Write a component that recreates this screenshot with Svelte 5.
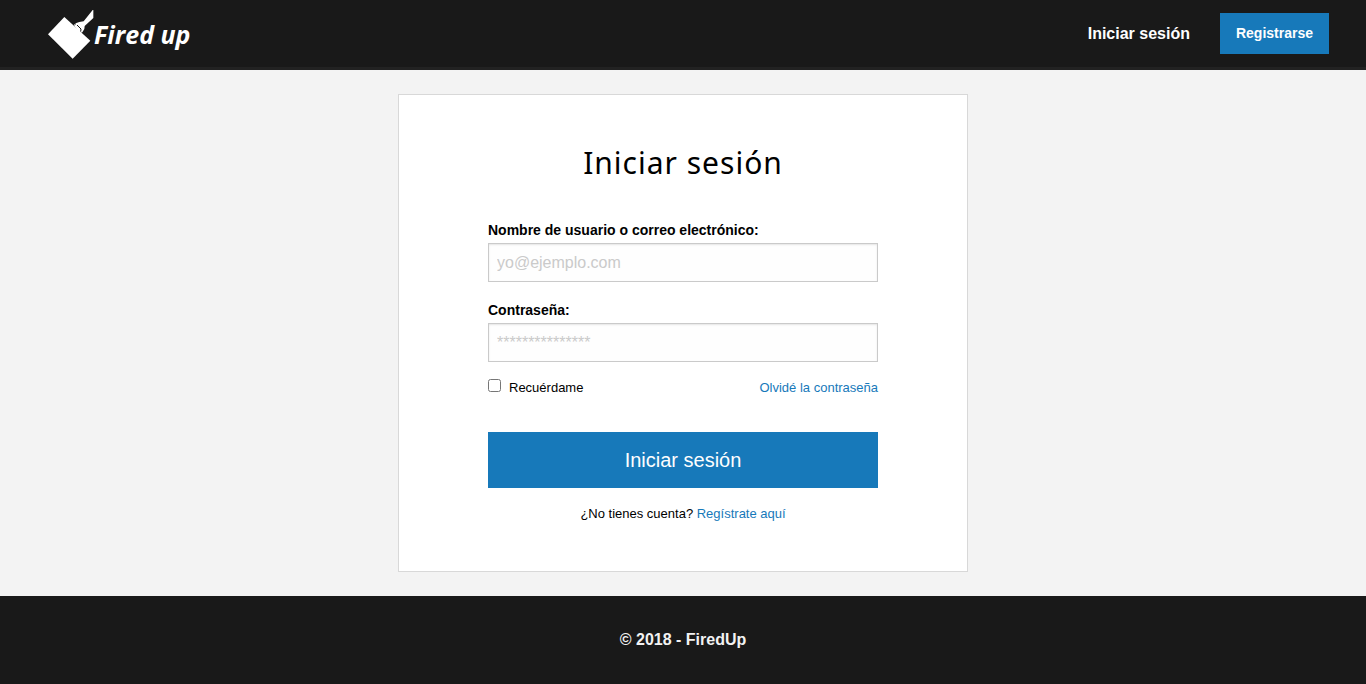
<script>
  let user = $state('');
  let password = $state('');
  let remember = $state(false);
</script>

<div class="page">
  <header>
    <a class="brand" href="#inicio">
      <svg viewBox="9 12 138 150" width="46" height="50" aria-hidden="true">
        <path d="M58 36 136 107 83 161 9 88Z" fill="#fff" />
        <path d="M86 60 94 54 103 51 116 49 143 15 145 15 145 39 119 63 118 72 112 82 103 84Z" fill="#fff" />
        <path d="M96 60 108 72 107 80" stroke="#191919" stroke-width="3" fill="none" />
        <path d="M88 61 92 58" stroke="#191919" stroke-width="2" fill="none" />
      </svg>
      <span>Fired up</span>
    </a>
    <nav>
      <a class="login" href="#login">Iniciar sesión</a>
      <a class="register" href="#registro">Registrarse</a>
    </nav>
  </header>

  <main>
    <section class="card">
      <h1>Iniciar sesión</h1>
      <form onsubmit={(e) => e.preventDefault()}>
        <div class="field">
          <label for="user">Nombre de usuario o correo electrónico:</label>
          <input id="user" type="text" placeholder="yo@ejemplo.com" bind:value={user} />
        </div>
        <div class="field">
          <label for="password">Contraseña:</label>
          <input id="password" type="password" placeholder="***************" bind:value={password} />
        </div>
        <div class="options">
          <label class="remember"><input type="checkbox" bind:checked={remember} />Recuérdame</label>
          <a href="#recuperar">Olvidé la contraseña</a>
        </div>
        <button type="submit">Iniciar sesión</button>
        <p class="signup">¿No tienes cuenta? <a href="#registro">Regístrate aquí</a></p>
      </form>
    </section>
  </main>

  <footer>© 2018 - FiredUp</footer>
</div>

<style>
  :global(body) {
    margin: 0;
    background: #f3f3f3;
  }
  .page {
    min-height: 100vh;
    display: flex;
    flex-direction: column;
    font-family: "Liberation Sans", Arial, sans-serif;
    font-size: 13px;
    color: #000;
  }
  .page * {
    box-sizing: border-box;
  }
  a {
    color: #1779ba;
    text-decoration: none;
  }
  header {
    display: flex;
    align-items: center;
    justify-content: space-between;
    height: 70px;
    padding: 0 37px 0 48px;
    background: #191919;
    border-bottom: 3px solid #222;
  }
  .brand {
    display: flex;
    align-items: center;
    color: #fff;
    font: italic bold 25px/32px "Open Sans", "Noto Sans", sans-serif;
  }
  nav {
    display: flex;
    align-items: center;
    gap: 30px;
    font-weight: bold;
  }
  .login {
    color: #fefefe;
    font-size: 16px;
  }
  .register {
    padding: 12px 16px;
    background: #1779ba;
    color: #fefefe;
    font-size: 14px;
    line-height: 17px;
  }
  main {
    flex: 1;
    padding: 24px;
  }
  .card {
    max-width: 570px;
    margin: 0 auto;
    padding: 45px 89px 47px;
    background: #fff;
    border: 1px solid #d8d8d8;
  }
  h1 {
    margin: 0 0 34px;
    font: 400 30px/45px "Lucida Sans", "Noto Sans", sans-serif;
    letter-spacing: 1px;
    text-align: center;
  }
  .field {
    margin-bottom: 17px;
  }
  .field label {
    display: block;
    margin-bottom: 2px;
    font-size: 14px;
    line-height: 22px;
    font-weight: bold;
  }
  .field input {
    display: block;
    width: 100%;
    height: 39px;
    padding: 8px;
    border: 1px solid #cacaca;
    border-radius: 0;
    background: #fefefe;
    box-shadow: inset 0 1px 2px rgba(10, 10, 10, 0.1);
    font: 16px "Liberation Sans", Arial, sans-serif;
    color: #0a0a0a;
  }
  .field input::placeholder {
    color: #cacaca;
  }
  .options {
    display: flex;
    justify-content: space-between;
    line-height: 18px;
  }
  .remember {
    display: flex;
    align-items: flex-start;
    gap: 8px;
  }
  .remember input {
    width: 13px;
    height: 13px;
    margin: 0;
  }
  button {
    display: block;
    width: 100%;
    height: 56px;
    margin: 35px 0 16px;
    border: 0;
    background: #1779ba;
    color: #fefefe;
    font: 20px "Liberation Sans", Arial, sans-serif;
    cursor: pointer;
  }
  .signup {
    margin: 0;
    line-height: 20px;
    text-align: center;
  }
  footer {
    padding: 32px 24px;
    background: #191919;
    color: #f2f2f2;
    font-size: 16px;
    line-height: 24px;
    font-weight: bold;
    text-align: center;
  }
</style>
